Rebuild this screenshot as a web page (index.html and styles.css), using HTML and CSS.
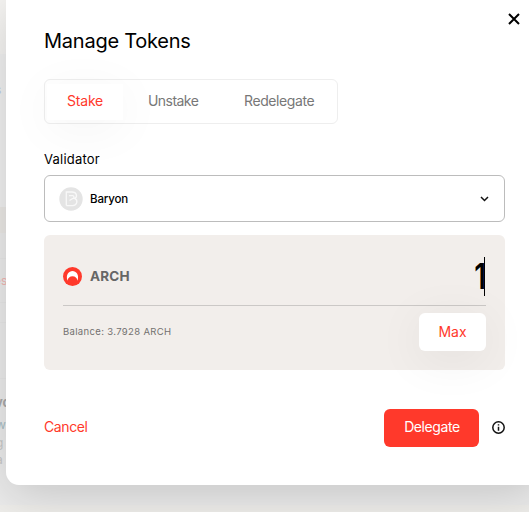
FILE: index.html
```html
<!DOCTYPE html>
<html lang="en">
<head>
<meta charset="utf-8">
<title>Manage Tokens</title>
<link rel="stylesheet" href="styles.css">
</head>
<body>
<div class="backdrop">
  <div class="band hero"></div>
  <div class="band summary"><span class="blue">s</span></div>
  <div class="band heading"></div>
  <div class="band row short"></div>
  <div class="band row"><span class="red">es</span></div>
  <div class="band row mid"></div>
  <div class="band row tall"></div>
  <div class="band copy"><b>vo</b><span class="teal">w</span><span>g n</span><span>a n</span></div>
  <div class="band footer"></div>
</div>
<main class="modal">
  <button class="close" aria-label="Close"><svg width="12" height="12" viewBox="0 0 12 12"><path d="M1 1 11 11M11 1 1 11"/></svg></button>
  <h1>Manage Tokens</h1>
  <nav class="tabs">
    <button class="tab active">Stake</button>
    <button class="tab unstake">Unstake</button>
    <button class="tab redelegate">Redelegate</button>
  </nav>
  <div class="label">Validator</div>
  <div class="select">
    <svg class="avatar" width="24" height="24" viewBox="0 0 24 24"><circle cx="12" cy="12" r="11.7"/><path d="M7.3 18.600V5H13c5 0 5.600 5 2.800 6.400 3.600 1.800 2.200 7.200-2 7.200H7.300M10 8.700h3.600c1.800 0 1.800 3-.2 3L10.500 13.500"/></svg>
    <span>Baryon</span>
    <svg class="chevron" width="9" height="6" viewBox="0 0 9 6"><path d="M1 1 4.5 4.5 8 1"/></svg>
  </div>
  <section class="panel">
    <div class="amount">
      <svg width="19" height="19" viewBox="0 0 19 19"><circle cx="9.5" cy="9.5" r="9.5" fill="#ff392b"/><path d="M4.5 13.8C2.4 7.5 6 4 9.5 4s7.1 3.5 5 9.8c-.4-2.8-2.3-4.5-5-4.5s-4.6 1.7-5 4.5Z" fill="#fff"/></svg>
      <strong>ARCH</strong>
      <span class="value">1</span><i class="caret"></i>
    </div>
    <div class="balance"><span>Balance: 3.7928 ARCH</span><button class="max">Max</button></div>
  </section>
  <footer class="actions">
    <button class="cancel">Cancel</button>
    <button class="delegate">Delegate</button>
    <svg class="info" width="13" height="13" viewBox="0 0 13 13"><circle cx="6.5" cy="6.5" r="5.7"/><path d="M6.5 5.8v4M6.5 3.2v1.4"/></svg>
  </footer>
</main>
</body>
</html>
```
FILE: styles.css
```css
* { box-sizing: border-box; }
body { margin: 0; width: 529px; height: 512px; overflow: hidden; position: relative; background: #ececec; font-family: Inter, sans-serif; color: #000; }
button { border: 0; padding: 0; margin: 0; background: none; font: inherit; color: inherit; letter-spacing: inherit; }
svg { display: block; flex: none; }

.backdrop { position: absolute; inset: 0; overflow: hidden; display: flex; flex-direction: column; font-size: 12px; line-height: 14px; }
.band { flex: none; }
.hero { height: 54px; background: #f5f4f2; }
.summary { height: 153px; padding-top: 29px; background: #f0f0f0; }
.blue { color: #bccbe8; margin-left: -5px; }
.heading { height: 26px; background: #ebe9e6; }
.row { height: 44px; border-bottom: 1px solid #e8e8e8; padding-top: 15px; }
.short { height: 26px; }
.mid { height: 20px; }
.tall { height: 56px; }
.red { color: #f1b7b4; margin-left: -6px; }
.copy { height: 126px; padding-top: 10px; display: flex; flex-direction: column; color: #c8c8c8; }
.copy b { font-size: 13px; color: #aaa; margin: 6px 0 8px -5px; line-height: 15px; }
.copy span { margin: 0 0 3px -4px; }
.copy .teal { color: #a9bfc6; margin-bottom: 4px; }
.footer { height: 8px; background: #efeeeb; }

.modal { position: relative; width: 537px; height: 485px; margin-left: 6px; padding: 28px 38px 0; background: #fff; border-radius: 0 0 13px 13px; box-shadow: 0 10px 50px rgba(0,0,0,.17); }
.close { position: absolute; left: 502px; top: 13px; }
.close path { fill: none; stroke: #000; stroke-width: 2; }
h1 { margin: 0; font-size: 20px; line-height: 26px; font-weight: 400; letter-spacing: -.24px; }
.tabs { width: 294px; height: 45px; margin-top: 25px; border: 1px solid #eee; border-radius: 6px; display: flex; align-items: center; font-size: 14px; letter-spacing: -.4px; color: #777; padding: 0 2px; }
.tab { height: 36px; text-align: left; padding-bottom: 2px; }
.active { width: 76px; padding-left: 20px; letter-spacing: -.2px; color: #ff392b; background: #fff; box-shadow: 0 8px 50px rgba(0,0,0,.05); }
.unstake { margin-left: 25px; width: 50px; letter-spacing: -.55px; }
.redelegate { margin-left: 46px; }
.label { margin-top: 26px; font-size: 13px; line-height: 18px; letter-spacing: .22px; }
.select { height: 47px; margin-top: 7px; border: 1px solid #bcbcbc; border-radius: 6px; display: flex; align-items: center; padding: 0 15px 0 14px; font-size: 11.5px; font-weight: 500; letter-spacing: -.15px; }
.select span { margin-left: 7px; }
.avatar circle { fill: #e4e4e4; }
.avatar path { fill: none; stroke: #f8f8f8; stroke-width: 1.3; }
.chevron { margin-left: auto; }
.chevron path { fill: none; stroke: #111; stroke-width: 1.5; }
.panel { margin-top: 13px; height: 135px; border-radius: 6px; background: #f2eeeb; padding: 0 19px; }
.amount { height: 71px; border-bottom: 1px solid #cbc8c6; padding-top: 12px; display: flex; align-items: center; }
.amount strong { font-size: 13.5px; font-weight: 700; color: #666; margin-left: 8px; line-height: 18px; letter-spacing: .2px; }
.value { margin-left: auto; font-size: 35px; line-height: 40px; font-weight: 600; margin-right: -3px; transform: scaleX(.8); transform-origin: 80% 50%; }
.caret { width: 1px; height: 39px; background: #000; margin-right: 1px; }
.balance { display: flex; align-items: flex-start; justify-content: space-between; padding-top: 7px; }
.balance span { font-size: 9.5px; line-height: 14px; margin-top: 12px; letter-spacing: .34px; color: #737170; }
.max { width: 67px; height: 38px; padding-bottom: 2px; border-radius: 6px; background: #fff; color: #ff392b; font-size: 14px; box-shadow: 0 8px 50px rgba(0,0,0,.07); }
.actions { margin-top: 39px; height: 38px; display: flex; align-items: center; font-size: 14px; letter-spacing: -.4px; }
.cancel { height: 38px; padding-bottom: 3px; color: #ff392b; }
.delegate { width: 95px; height: 38px; padding: 0 0 3px 1px; margin-left: auto; border-radius: 6px; background: #ff392b; color: #fff; }
.info { margin: -2px 0 0 13px; }
.info circle, .info path { fill: none; stroke: #111; stroke-width: 1.5; }
```
